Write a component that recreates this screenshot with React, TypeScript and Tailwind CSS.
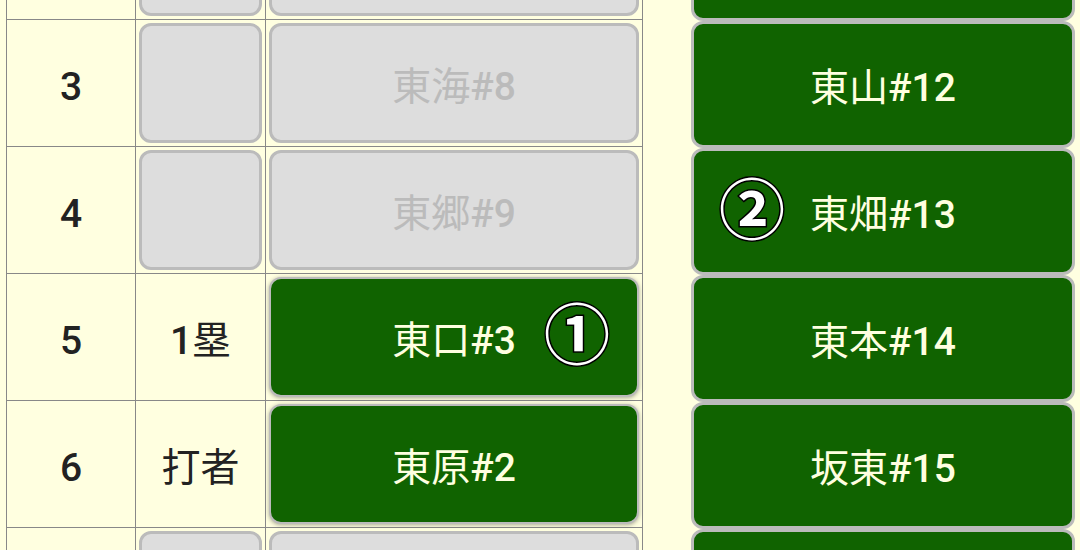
import React from "react";

const FONT = "font-['Roboto','Noto_Sans_CJK_JP',sans-serif]";

type Row = { no: string; pos?: string; name: string; on: boolean; mark?: string };

const rows: Row[] = [
  { no: "2", name: "東田#7", on: false },
  { no: "3", name: "東海#8", on: false },
  { no: "4", name: "東郷#9", on: false },
  { no: "5", pos: "1塁", name: "東口#3", on: true, mark: "①" },
  { no: "6", pos: "打者", name: "東原#2", on: true },
  { no: "7", name: "東谷#10", on: false },
];

const bench = [
  { name: "東野#11" },
  { name: "東山#12" },
  { name: "東畑#13", mark: "②" },
  { name: "東本#14" },
  { name: "坂東#15" },
  { name: "東川#16" },
];

// latin bits render medium, kanji stay regular (like the device font)
function Label({ text }: { text: string }) {
  const parts = text.match(/[\u3000-\u9fff]+|[^\u3000-\u9fff]+/g) || [];
  return (
    <span>
      {parts.map((p, i) =>
        /[\u3000-\u9fff]/.test(p) ? (
          <span key={i} className="font-normal">{p}</span>
        ) : (
          <span key={i} className="font-medium">{p}</span>
        )
      )}
    </span>
  );
}

function Mark({ children, side }: { children: string; side: "left" | "right" }) {
  return (
    <span
      className={`absolute top-1/2 -translate-y-1/2 text-[66px] leading-none font-bold text-white [-webkit-text-stroke:3px_black] [paint-order:stroke_fill] ${
        side === "right" ? "right-[27px]" : "left-[25px]"
      }`}
    >
      {children}
    </span>
  );
}

export default function App() {
  return (
    <div className={`h-[550px] w-[1080px] overflow-hidden bg-[#ffffe0] ${FONT}`}>
      <div className="flex items-start pl-[6px]">
        {/* lineup table */}
        <div className="-mt-[107px] w-[637px] border-l border-[#888]">
          {rows.map((r) => (
            <div
              key={r.no}
              className="grid h-[127px] grid-cols-[129px_130px_377px] border-b border-[#888]"
            >
              <div className="flex items-center justify-center border-r border-[#888] pt-[8px] text-[39px] font-medium text-[#222]">
                {r.no}
              </div>
              <div className="flex items-center justify-center border-r border-[#888] p-[3px]">
                {r.pos ? (
                  <span className="pt-[8px] text-[39px] text-[#222]">
                    <Label text={r.pos} />
                  </span>
                ) : (
                  <div className="h-full w-full rounded-[12px] border-[3px] border-[#bbb] bg-[#ddd]" />
                )}
              </div>
              <div className="border-r border-[#888] p-[3px]">
                {r.on ? (
                  <div className="relative flex h-full w-full items-center justify-center rounded-[12px] border-2 border-[#bbb] bg-[#106300] pt-[8px] text-[39px] text-[#ffffe0] shadow-[0_1px_4px_rgba(0,0,0,0.35)]">
                    <Label text={r.name} />
                    {r.mark && <Mark side="right">{r.mark}</Mark>}
                  </div>
                ) : (
                  <div className="flex h-full w-full items-center justify-center rounded-[12px] border-[3px] border-[#bbb] bg-[#ddd] pt-[8px] text-[39px] text-[#bbb]">
                    <Label text={r.name} />
                  </div>
                )}
              </div>
            </div>
          ))}
        </div>

        {/* bench */}
        <div className="-mt-[106px] ml-[48px] flex w-[384px] flex-col">
          {bench.map((b) => (
            <div
              key={b.name}
              className="relative flex h-[127px] items-center justify-center rounded-[12px] border-[3px] border-[#bbb] bg-[#106300] pt-[8px] text-[39px] text-[#ffffe0]"
            >
              <Label text={b.name} />
              {b.mark && <Mark side="left">{b.mark}</Mark>}
            </div>
          ))}
        </div>
      </div>
    </div>
  );
}
